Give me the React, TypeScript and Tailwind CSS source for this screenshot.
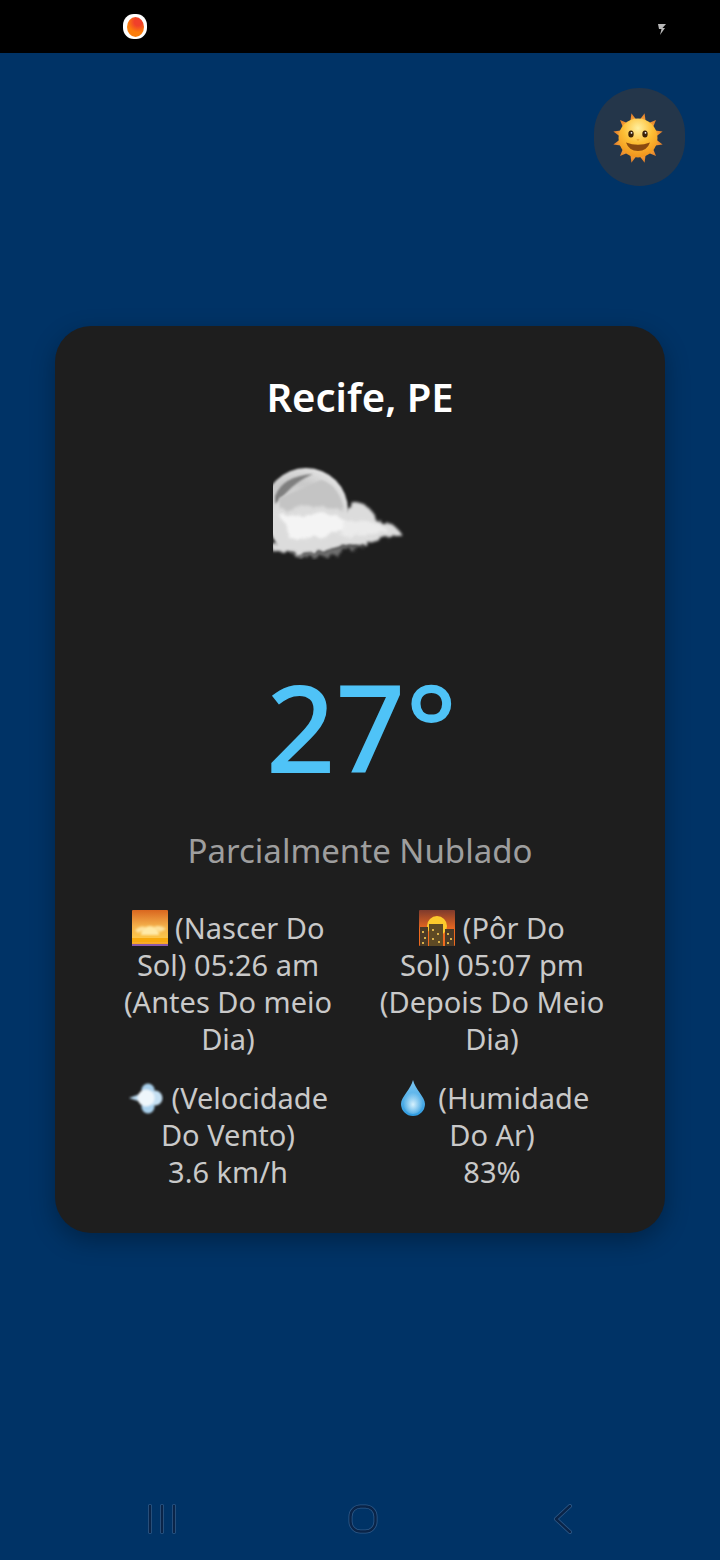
import type { ReactNode } from "react";

const SunFace = () => (
  <svg width="52" height="52" viewBox="0 0 52 52">
    <defs>
      <radialGradient id="sunBody" cx="50%" cy="25%" r="75%">
        <stop offset="0%" stopColor="#fff0a0" />
        <stop offset="50%" stopColor="#fdbf35" />
        <stop offset="100%" stopColor="#f0921c" />
      </radialGradient>
      <linearGradient id="sunRay" x1="0" y1="0" x2="0" y2="1">
        <stop offset="0%" stopColor="#e07a28" />
        <stop offset="100%" stopColor="#f6a63a" />
      </linearGradient>
    </defs>
    <g fill="url(#sunRay)">
      {[0, 30, 60, 90, 120, 150, 180, 210, 240, 270, 300, 330].map((a) => (
        <path key={a} d="M22.5 9 L26 0.5 L29.5 9 Z" transform={`rotate(${a + 15} 26 26)`} />
      ))}
    </g>
    <circle cx="26" cy="26" r="19.5" fill="url(#sunBody)" />
    <ellipse cx="19" cy="22" rx="2.7" ry="3.6" fill="#3a2208" />
    <ellipse cx="33" cy="22" rx="2.7" ry="3.6" fill="#3a2208" />
    <circle cx="19.5" cy="20.8" r="0.9" fill="#fff" />
    <circle cx="33.5" cy="20.8" r="0.9" fill="#fff" />
    <path d="M24.5 27.5 Q26 29.5 27.5 27.5 Z" fill="#e58a1e" />
    <path d="M14 30.5 Q26 35 38 30.5 Q35 39 26 39 Q17 39 14 30.5 Z" fill="#8a4a10" />
  </svg>
);

const Sunrise = () => (
  <svg width="36" height="36" viewBox="0 0 36 36" className="inline-block align-[-7px]">
    <defs>
      <linearGradient id="riseSky" x1="0" y1="0" x2="0" y2="1">
        <stop offset="0%" stopColor="#d9661f" />
        <stop offset="45%" stopColor="#f4b04a" />
        <stop offset="78%" stopColor="#fbc64a" />
        <stop offset="100%" stopColor="#f59a12" />
      </linearGradient>
      <filter id="riseBlur">
        <feGaussianBlur stdDeviation="1.2" />
      </filter>
    </defs>
    <rect width="36" height="36" rx="1" fill="url(#riseSky)" />
    <g filter="url(#riseBlur)">
      <path d="M9 25 A9 9 0 0 1 27 25 Z" fill="#ffeaa8" />
      <path d="M3 20 Q9 14 15 18 L6 23 Z M22 17 Q28 14 34 19 L28 22 Z" fill="#fde3a0" />
    </g>
    <rect y="28" width="36" height="4" fill="#f7a90f" />
    <rect y="34" width="36" height="2" fill="#8a5aa8" />
  </svg>
);

const Sunset = () => (
  <svg width="36" height="36" viewBox="0 0 36 36" className="inline-block align-[-7px]">
    <defs>
      <linearGradient id="setSky" x1="0" y1="0" x2="0" y2="1">
        <stop offset="0%" stopColor="#7e3a2c" />
        <stop offset="55%" stopColor="#ef6a1f" />
      </linearGradient>
    </defs>
    <rect width="36" height="36" rx="1" fill="url(#setSky)" />
    <circle cx="18" cy="16" r="10" fill="#fcc92c" />
    <rect x="1" y="17" width="8" height="19" fill="#4a3a26" />
    <rect x="10" y="14" width="14" height="22" fill="#5e4a24" />
    <rect x="26" y="19" width="9" height="17" fill="#4a3a26" />
    <g fill="#d8b04a">
      <rect x="3" y="21" width="2" height="2" />
      <rect x="5" y="27" width="2" height="2" />
      <rect x="3" y="32" width="2" height="2" />
      <rect x="13" y="19" width="2" height="2" />
      <rect x="18" y="23" width="2" height="2" />
      <rect x="13" y="28" width="2" height="2" />
      <rect x="19" y="31" width="2" height="2" />
      <rect x="28" y="23" width="2" height="2" />
      <rect x="31" y="28" width="2" height="2" />
      <rect x="28" y="32" width="2" height="2" />
    </g>
  </svg>
);

const Wind = () => (
  <svg width="36" height="36" viewBox="0 0 36 36" className="inline-block align-[-7px]">
    <defs>
      <filter id="windBlur" x="-20%" y="-20%" width="140%" height="140%">
        <feGaussianBlur stdDeviation="0.8" />
      </filter>
    </defs>
    <g filter="url(#windBlur)">
      <path d="M1 18 L12 14 L13 22 Z" fill="#b9d8ee" />
      <circle cx="20" cy="10" r="6.5" fill="#a9d0ec" />
      <circle cx="20" cy="27" r="6.5" fill="#a9d0ec" />
      <circle cx="27" cy="18" r="7.5" fill="#c5e0f3" />
      <circle cx="18" cy="18" r="8.5" fill="#eef6fb" />
    </g>
  </svg>
);

const Droplet = () => (
  <svg width="36" height="36" viewBox="0 0 36 36" className="inline-block align-[-7px]">
    <defs>
      <linearGradient id="dropFill" x1="0" y1="0" x2="0" y2="1">
        <stop offset="0%" stopColor="#7cc6f2" />
        <stop offset="100%" stopColor="#2f9be0" />
      </linearGradient>
      <radialGradient id="dropShine" cx="50%" cy="60%" r="50%">
        <stop offset="0%" stopColor="#d6f1fd" />
        <stop offset="100%" stopColor="#d6f1fd" stopOpacity="0" />
      </radialGradient>
    </defs>
    <path d="M18 0 C20 9 30 17 30 24 A12 12 0 0 1 6 24 C6 17 16 9 18 0 Z" fill="url(#dropFill)" />
    <ellipse cx="18" cy="22" rx="10" ry="12" fill="url(#dropShine)" />
  </svg>
);

const MoonCloud = () => (
  <svg width="146" height="96" viewBox="0 0 146 96" className="block">
    <defs>
      <filter id="puff" x="-20%" y="-30%" width="140%" height="160%">
        <feTurbulence type="fractalNoise" baseFrequency="0.09" numOctaves="4" seed="7" />
        <feDisplacementMap in="SourceGraphic" scale="12" />
        <feGaussianBlur stdDeviation="1.8" />
      </filter>
      <filter id="soft">
        <feGaussianBlur stdDeviation="1" />
      </filter>
      <radialGradient id="moonFill" cx="35%" cy="70%" r="75%">
        <stop offset="0%" stopColor="#f5f5f5" />
        <stop offset="70%" stopColor="#c8c8c8" />
        <stop offset="100%" stopColor="#e4e4e4" />
      </radialGradient>
      <clipPath id="leftCut">
        <rect x="0" y="0" width="146" height="96" />
      </clipPath>
    </defs>
    <g clipPath="url(#leftCut)">
      <circle cx="33" cy="44" r="42" fill="url(#moonFill)" filter="url(#soft)" />
      <path d="M2 30 Q10 10 40 8 Q24 15 14 26 Q8 32 2 38 Z" fill="#7f7f7f" filter="url(#soft)" />
      <path d="M6 32 Q26 24 48 14 Q64 18 70 40 L62 64 L8 70 Z" fill="#c4c4c4" filter="url(#soft)" />
      <g filter="url(#puff)">
        <path d="M0 44 Q34 38 70 44 Q84 32 98 44 L106 58 Q118 52 128 68 L100 76 Q60 86 24 88 L0 86 Z" fill="#dcdcdc" />
      </g>
      <g filter="url(#puff)" opacity="0.95">
        <path d="M8 50 Q46 42 76 56 Q56 78 18 74 Z" fill="#f6f6f6" />
        <path d="M70 56 Q94 50 116 64 Q92 72 66 70 Z" fill="#ececec" />
      </g>
      <path d="M18 88 Q56 84 92 80 Q60 96 18 88 Z" fill="#6e6e6e" filter="url(#puff)" />
    </g>
  </svg>
);

const Detail = ({ children }: { children: ReactNode }) => (
  <p className="text-center text-[29px] leading-[37px] text-[#c9c9c9]">{children}</p>
);

export default function App() {
  return (
    <div className="min-h-[1560px] flex flex-col bg-[#003366] font-['Noto_Sans',sans-serif]">
      <div className="h-[53px] shrink-0 bg-black flex items-center justify-between pl-[123px] pr-[53px]">
        <div className="w-6 h-[25px] rounded-[45%] bg-white flex items-center justify-center">
          <div className="w-[17px] h-[20px] rounded-[50%] bg-[radial-gradient(circle_at_65%_25%,#f0402a_20%,#fb7d0c_55%)]" />
        </div>
        <svg width="10" height="14" viewBox="0 0 10 14" className="mt-1">
          <path d="M1 2 H9 L5.5 6 H8 L3 13 L4.5 7 H2 Z" fill="#b8b8b8" />
        </svg>
      </div>

      <div className="flex justify-end pt-[35px] pr-[35px]">
        <button className="w-[91px] h-[98px] rounded-full bg-[#24364a] flex items-center justify-center">
          <span className="mt-[1px] ml-[-3px]">
            <SunFace />
          </span>
        </button>
      </div>

      <div className="mx-[55px] mt-[140px] h-[907px] rounded-[36px] bg-[#1e1e1e] shadow-[0_8px_24px_rgba(0,0,0,0.3)] flex flex-col items-center pt-[43px]">
        <h1 className="text-[40px] leading-[56px] font-semibold text-white">Recife, PE</h1>
        <div className="mt-[41px] self-start ml-[218px] w-[146px]">
          <MoonCloud />
        </div>
        <div className="mt-[84px] ml-[3px] text-[122px] leading-[160px] font-medium text-[#4fc3f7]">27°</div>
        <p className="mt-[23px] text-[33px] leading-[44px] text-[#9e9e9e]">Parcialmente Nublado</p>
        <div className="mt-[36px] w-[528px] grid grid-cols-2 gap-y-[22px]">
          <Detail>
            <Sunrise /> (Nascer Do<br />Sol) 05:26 am<br />(Antes Do meio<br />Dia)
          </Detail>
          <Detail>
            <Sunset /> (Pôr Do<br />Sol) 05:07 pm<br />(Depois Do Meio<br />Dia)
          </Detail>
          <Detail>
            <Wind /> (Velocidade<br />Do Vento)<br />3.6 km/h
          </Detail>
          <Detail>
            <Droplet /> (Humidade<br />Do Ar)<br />83%
          </Detail>
        </div>
      </div>

      <div className="mt-[271px] flex items-center justify-between pl-[147px] pr-[147px]">
        <svg width="30" height="30" viewBox="0 0 30 30" fill="none" strokeLinecap="round">
          <path d="M3 2 V28 M15 2 V28 M27 2 V28" stroke="#2f5a88" strokeWidth="4" />
          <path d="M3 2 V28 M15 2 V28 M27 2 V28" stroke="#0a2448" strokeWidth="2.4" />
        </svg>
        <svg width="30" height="30" viewBox="0 0 30 30" fill="none" className="mr-[5px]">
          <rect x="2.5" y="2.5" width="25" height="25" rx="10" stroke="#2f5a88" strokeWidth="4" />
          <rect x="2.5" y="2.5" width="25" height="25" rx="10" stroke="#0a2448" strokeWidth="2.4" />
        </svg>
        <svg width="20" height="30" viewBox="0 0 20 30" fill="none" strokeLinecap="round" strokeLinejoin="round">
          <path d="M17 2 L3 15 L17 28" stroke="#2f5a88" strokeWidth="4" />
          <path d="M17 2 L3 15 L17 28" stroke="#0a2448" strokeWidth="2.4" />
        </svg>
      </div>
    </div>
  );
}
